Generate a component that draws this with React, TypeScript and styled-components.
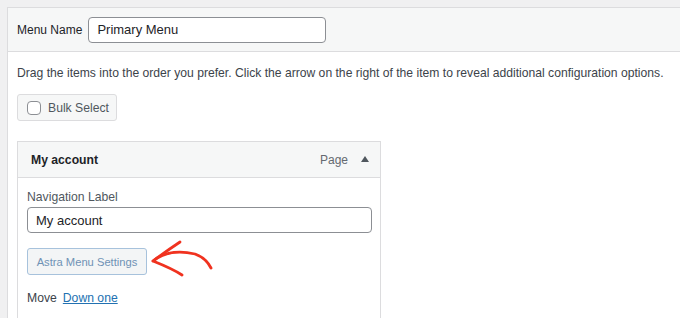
import React from "react";
import styled, { createGlobalStyle } from "styled-components";

const Global = createGlobalStyle`
  html, body { margin: 0; padding: 0; }
  body {
    background: #f0f0f1;
    font-family: "Liberation Sans", Arial, sans-serif;
    font-size: 12px;
    color: #3c434a;
    overflow: hidden;
  }
`;

const Page = styled.div`
  width: 680px;
  height: 318px;
  padding: 7px 0 0 7px;
  box-sizing: border-box;
  overflow: hidden;
`;

const Panel = styled.div`
  background: #fff;
  border: 1px solid #dcdcde;
  border-right: none;
  height: 400px;
`;

const Header = styled.div`
  background: #f6f7f7;
  border-bottom: 1px solid #dcdcde;
  height: 43px;
  display: flex;
  align-items: center;
  padding-left: 9px;
  gap: 6px;
`;

const Label = styled.span`
  color: #1d2327;
  font-size: 12px;
`;

const TextInput = styled.div<{ $w: number }>`
  box-sizing: border-box;
  width: ${(p) => p.$w}px;
  height: 26px;
  border: 1px solid #8c8f94;
  border-radius: 4px;
  background: #fff;
  display: flex;
  align-items: center;
  padding-left: 8px;
  font-size: 13px;
  color: #1d2327;
`;

const Body = styled.div`
  padding: 12px 0 0 9px;
  display: flex;
  flex-direction: column;
  align-items: flex-start;
`;

const Description = styled.p`
  margin: 0;
  color: #3c434a;
  font-size: 12.15px;
  line-height: 18px;
  white-space: nowrap;
`;

const BulkButton = styled.div`
  margin-top: 12px;
  box-sizing: border-box;
  width: 100px;
  height: 27px;
  border: 1px solid #dcdcde;
  border-radius: 3px;
  background: #f6f7f7;
  display: flex;
  align-items: center;
  padding-left: 9px;
  gap: 7px;
  color: #50575e;
  font-size: 12.2px;
`;

const Checkbox = styled.span`
  box-sizing: border-box;
  width: 14px;
  height: 14px;
  border: 1px solid #8c8f94;
  border-radius: 4px;
  background: #fff;
`;

const Item = styled.div`
  margin-top: 20px;
  width: 364px;
  box-sizing: border-box;
  border: 1px solid #dcdcde;
  height: 200px;
`;

const ItemHeader = styled.div`
  background: #f6f7f7;
  border-bottom: 1px solid #dcdcde;
  height: 35px;
  display: flex;
  align-items: center;
  padding: 0 10px 0 13px;
`;

const ItemTitle = styled.span`
  flex: 1;
  font-weight: 600;
  color: #1d2327;
  font-size: 12.2px;
`;

const ItemType = styled.span`
  color: #646970;
  font-size: 12px;
  margin-right: 13px;
`;

const Caret = styled.span`
  width: 0;
  height: 0;
  border-left: 4px solid transparent;
  border-right: 4px solid transparent;
  border-bottom: 6px solid #50575e;
  margin-right: 1px;
  margin-bottom: 2px;
`;

const ItemBody = styled.div`
  padding: 11px 0 0 9px;
  display: flex;
  flex-direction: column;
  align-items: flex-start;
`;

const FieldLabel = styled.span`
  color: #50575e;
  font-size: 12.2px;
  line-height: 16px;
`;

const AstraRow = styled.div`
  margin-top: 15px;
  display: flex;
  align-items: center;
  position: relative;
`;

const AstraButton = styled.div`
  box-sizing: border-box;
  width: 120px;
  height: 27px;
  border: 1px solid #a7c2dc;
  border-radius: 3px;
  background: #f3f5f6;
  color: #6f92b5;
  font-size: 11.2px;
  display: flex;
  align-items: center;
  justify-content: center;
`;

const Arrow = styled.svg`
  position: absolute;
  left: 120px;
  top: -10px;
`;

const MoveRow = styled.div`
  margin-top: 15px;
  display: flex;
  gap: 6px;
  color: #3c434a;
  font-size: 12.2px;
  line-height: 16px;
`;

const Link = styled.a`
  color: #2271b1;
  text-decoration: underline;
`;

export default function App() {
  return (
    <>
      <Global />
      <Page>
        <Panel>
          <Header>
            <Label>Menu Name</Label>
            <TextInput $w={238}>Primary Menu</TextInput>
          </Header>
          <Body>
            <Description>
              Drag the items into the order you prefer. Click the arrow on the right of the item to reveal additional configuration options.
            </Description>
            <BulkButton>
              <Checkbox />
              Bulk Select
            </BulkButton>
            <Item>
              <ItemHeader>
                <ItemTitle>My account</ItemTitle>
                <ItemType>Page</ItemType>
                <Caret />
              </ItemHeader>
              <ItemBody>
                <FieldLabel>Navigation Label</FieldLabel>
                <TextInput $w={345} style={{ marginTop: 2 }}>My account</TextInput>
                <AstraRow>
                  <AstraButton>Astra Menu Settings</AstraButton>
                  <Arrow width="100" height="50" viewBox="0 0 100 50">
                    <path
                      d="M6 23 C 16 15, 30 12, 48 16 C 56 19, 61 24, 64 30"
                      fill="none"
                      stroke="#f0321f"
                      strokeWidth="2.8"
                      strokeLinecap="round"
                    />
                    <path
                      d="M33 4 C 24 10, 14 17, 6 23 C 16 27, 26 31, 35 37"
                      fill="none"
                      stroke="#f0321f"
                      strokeWidth="2.8"
                      strokeLinecap="round"
                      strokeLinejoin="round"
                    />
                  </Arrow>
                </AstraRow>
                <MoveRow>
                  Move <Link>Down one</Link>
                </MoveRow>
              </ItemBody>
            </Item>
          </Body>
        </Panel>
      </Page>
    </>
  );
}
